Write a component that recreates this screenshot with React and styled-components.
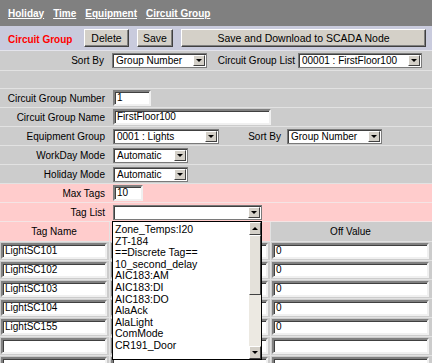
import React from 'react'
import styled, { createGlobalStyle } from 'styled-components'

const Global = createGlobalStyle`
  html, body { margin: 0; padding: 0; background: #cccccc; }
  body { font-family: "Liberation Sans", Arial, sans-serif; font-size: 10px; color: #000; }
`

const Page = styled.div`
  width: 432px;
  height: 363px;
  overflow: hidden;
  position: relative;
  background: #cccccc;
`

const Nav = styled.div`
  height: 26px;
  background: #808080;
  display: flex;
  align-items: center;
  gap: 9px;
  padding-left: 8px;
  a {
    color: #fff;
    font-weight: bold;
    font-size: 10px;
    text-decoration: underline;
  }
`

const Toolbar = styled.div`
  height: 24px;
  background: #c9cbdd;
  display: flex;
  align-items: center;
  padding-left: 8px;
  border-bottom: 1px solid #e4e4ec;
`

const Title = styled.span`
  color: #ff0000;
  font-weight: bold;
  width: 76px;
  margin-top: 3px;
`

const Button = styled.div`
  height: 18px;
  width: ${p => p.$w}px;
  margin-right: ${p => p.$mr || 0}px;
  box-sizing: border-box;
  background: #d4d0c8;
  border: 1px solid;
  border-color: #fff #404040 #404040 #fff;
  box-shadow: inset -1px -1px 0 #808080;
  display: flex;
  align-items: center;
  justify-content: center;
  font-size: 10.5px;
`

const Row = styled.div`
  height: ${p => p.$h || 18}px;
  background: ${p => (p.$pink ? '#ffcccc' : '#cccccc')};
  border-bottom: 1px solid ${p => (p.$pink ? '#f4e4e4' : '#e2e2e2')};
  display: flex;
  align-items: center;
`

const Label = styled.div`
  width: ${p => p.$w || 105}px;
  text-align: right;
  padding-right: ${p => p.$pr ?? 8}px;
  flex-shrink: 0;
  white-space: nowrap;
`

const TextBox = styled.div`
  width: ${p => p.$w}px;
  height: 16px;
  box-sizing: border-box;
  background: #fff;
  border: 2px solid;
  border-color: #808080 #f0f0f0 #f0f0f0 #808080;
  box-shadow: inset 1px 1px 0 #404040;
  padding-left: 2px;
  line-height: 12px;
  white-space: nowrap;
  overflow: hidden;
`

const SelectBox = styled.div`
  width: ${p => p.$w}px;
  height: 15px;
  box-sizing: border-box;
  background: #fff;
  border: 1px solid #7a7a7a;
  box-shadow: inset 1px 1px 0 #404040;
  display: flex;
  align-items: center;
  padding-left: 3px;
  margin-right: ${p => p.$mr || 0}px;
  span { flex: 1; white-space: nowrap; overflow: hidden; }
`

const Arrow = styled.div`
  width: 12px;
  height: ${p => (p.$tall ? 13 : 11)}px;
  margin-right: ${p => (p.$flush ? 0 : 1)}px;
  flex-shrink: 0;
  box-sizing: border-box;
  background: #d4d0c8;
  border: 1px solid;
  border-color: #fff #404040 #404040 #fff;
  display: flex;
  align-items: center;
  justify-content: center;
  &::after {
    content: '';
    border-left: 3px solid transparent;
    border-right: 3px solid transparent;
    border-${p => (p.$up ? 'bottom' : 'top')}: 3px solid #000;
  }
`

const Select = ({ w, mr, children }) => (
  <SelectBox $w={w} $mr={mr}>
    <span>{children}</span>
    <Arrow />
  </SelectBox>
)

const Grid = styled.div`
  display: grid;
  grid-template-columns: 110px 161px 161px;
`

const Cell = styled.div`
  height: ${p => p.$h || 18}px;
  background: ${p => (p.$pink ? '#ffcccc' : '#cccccc')};
  border-bottom: 1px solid #e2e2e2;
  border-right: ${p => (p.$last ? 'none' : '1px solid #e2e2e2')};
  display: flex;
  align-items: center;
  justify-content: ${p => (p.$center ? 'center' : 'flex-start')};
  padding: 0 ${p => (p.$last ? 3 : 2)}px 0 1px;
`

const Dropdown = styled.div`
  position: absolute;
  left: 112px;
  top: 221px;
  width: 150px;
  height: 139px;
  box-sizing: border-box;
  background: #fff;
  border: 1px solid #000;
  display: flex;
`

const Items = styled.div`
  flex: 1;
  padding: 2px 0 0 2px;
  font-size: 10.5px;
  div { height: 11.6px; line-height: 11.6px; white-space: nowrap; }
`

const Scroll = styled.div`
  width: 12px;
  background: #ece9e2;
  display: flex;
  flex-direction: column;
`

const Thumb = styled.div`
  height: 60px;
  box-sizing: border-box;
  background: #e4e1da;
  border: 1px solid;
  border-color: #fff #404040 #404040 #fff;
`

const Track = styled.div`
  flex: 1;
`

const tags = ['LightSC101', 'LightSC102', 'LightSC103', 'LightSC104', 'LightSC155', '', '']
const items = ['Zone_Temps:I20', 'ZT-184', '==Discrete Tag==', '10_second_delay', 'AIC183:AM', 'AIC183:DI', 'AIC183:DO', 'AlaAck', 'AlaLight', 'ComMode', 'CR191_Door']

export default function App() {
  return (
    <Page>
      <Global />
      <Nav>
        <a>Holiday</a>
        <a>Time</a>
        <a>Equipment</a>
        <a>Circuit Group</a>
      </Nav>
      <Toolbar>
        <Title>Circuit Group</Title>
        <Button $w={45} $mr={8}>Delete</Button>
        <Button $w={36} $mr={8}>Save</Button>
        <Button $w={245}>Save and Download to SCADA Node</Button>
      </Toolbar>
      <Row $h={19}>
        <Label $w={104}>Sort By</Label>
        <Select w={95}>Group Number</Select>
        <Label $w={88} $pr={3}>Circuit Group List</Label>
        <Select w={124}>00001 : FirstFloor100</Select>
      </Row>
      <Row $h={17} />
      <Row>
        <Label>Circuit Group Number</Label>
        <TextBox $w={38}>1</TextBox>
      </Row>
      <Row>
        <Label>Circuit Group Name</Label>
        <TextBox $w={158}>FirstFloor100</TextBox>
      </Row>
      <Row>
        <Label>Equipment Group</Label>
        <Select w={106} mr={26}>0001 : Lights</Select>
        <Label $w={36} $pr={6}>Sort By</Label>
        <Select w={95}>Group Number</Select>
      </Row>
      <Row>
        <Label>WorkDay Mode</Label>
        <Select w={75}>Automatic</Select>
      </Row>
      <Row>
        <Label>Holiday Mode</Label>
        <Select w={75}>Automatic</Select>
      </Row>
      <Row $pink>
        <Label>Max Tags</Label>
        <TextBox $w={30}>10</TextBox>
      </Row>
      <Row $pink>
        <Label>Tag List</Label>
        <Select w={149} />
      </Row>
      <Grid>
        <Cell $pink $center $h={19}>Tag Name</Cell>
        <Cell $pink $h={19} />
        <Cell $last $center $h={19}>Off Value</Cell>
        {tags.map((t, i) => (
          <React.Fragment key={i}>
            <Cell><TextBox $w={107}>{t}</TextBox></Cell>
            <Cell><TextBox $w={158} /></Cell>
            <Cell $last><TextBox $w={157}>{t ? '0' : ''}</TextBox></Cell>
          </React.Fragment>
        ))}
      </Grid>
      <Dropdown>
        <Items>
          {items.map(it => <div key={it}>{it}</div>)}
        </Items>
        <Scroll>
          <Arrow $up $tall $flush />
          <Thumb />
          <Track />
          <Arrow $tall $flush />
        </Scroll>
      </Dropdown>
    </Page>
  )
}
